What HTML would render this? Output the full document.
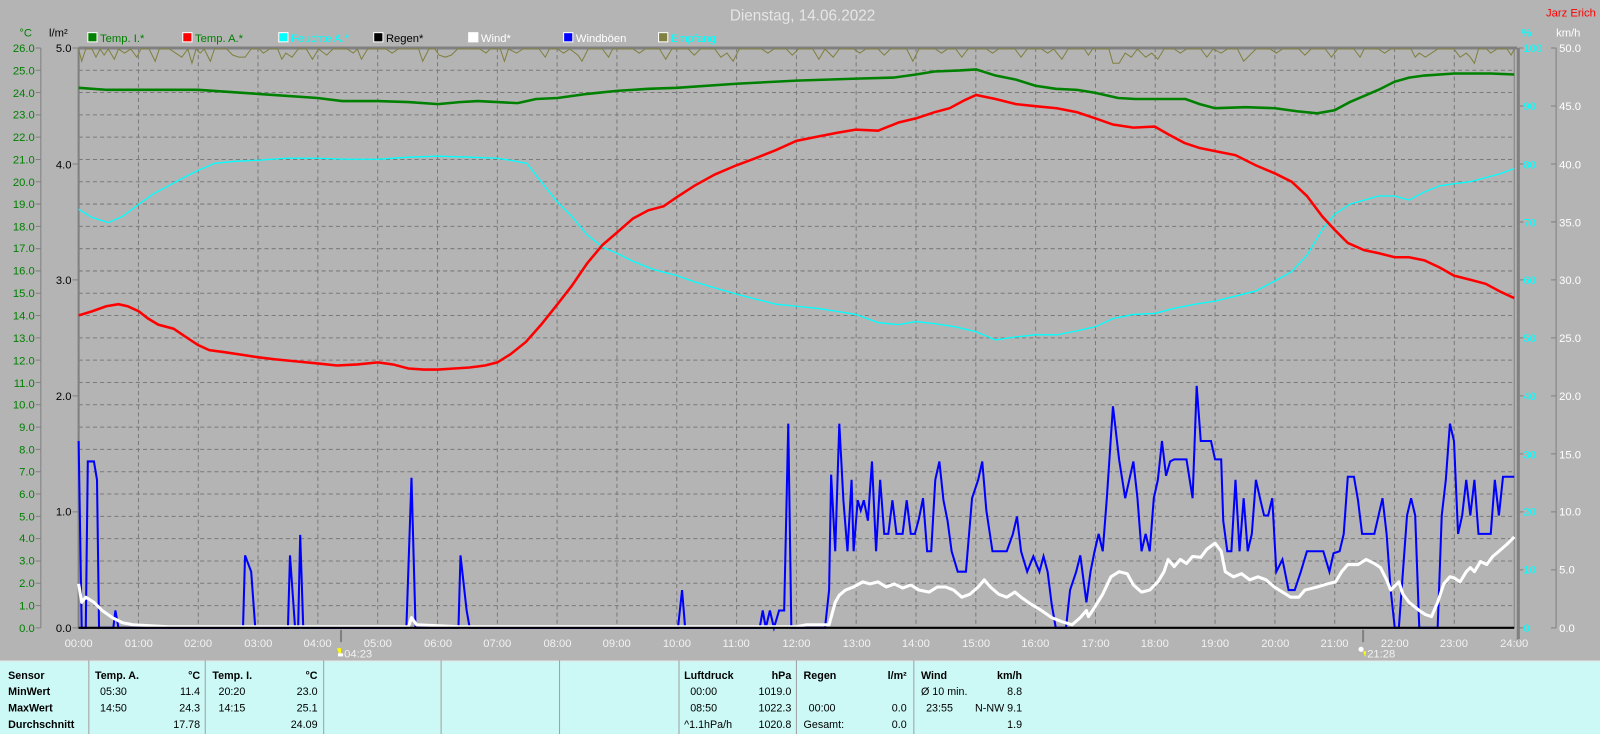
<!DOCTYPE html>
<html><head><meta charset="utf-8"><style>
html,body{margin:0;padding:0;background:#b4b4b4;width:1600px;height:734px;overflow:hidden}
svg{display:block}
text{font-family:"Liberation Sans",sans-serif}
</style></head><body>
<svg width="1600" height="734" viewBox="0 0 1567 719" preserveAspectRatio="none">
<rect x="0" y="0" width="1567" height="719" fill="#b4b4b4"/>
<text x="786" y="20" text-anchor="middle" font-size="15" fill="#e6e6e6">Dienstag, 14.06.2022</text>
<text x="1563" y="16" text-anchor="end" font-size="11" fill="#ff0000">Jarz Erich</text>
<!-- legend -->
<g font-size="11">
<rect x="86" y="32" width="9" height="9" fill="#008000" stroke="#fff"/><text x="98" y="41" fill="#008000">Temp. I.*</text>
<rect x="179" y="32" width="9" height="9" fill="#ff0000" stroke="#fff"/><text x="191" y="41" fill="#008000">Temp. A.*</text>
<rect x="273" y="32" width="9" height="9" fill="#00ffff" stroke="#fff"/><text x="285" y="41" fill="#00ffff">Feuchte A.*</text>
<rect x="366" y="32" width="9" height="9" fill="#000" stroke="#fff"/><text x="378" y="41" fill="#000">Regen*</text>
<rect x="459" y="32" width="9" height="9" fill="#fff" stroke="#fff"/><text x="471" y="41" fill="#fff">Wind*</text>
<rect x="552" y="32" width="9" height="9" fill="#0000ff" stroke="#fff"/><text x="564" y="41" fill="#fff">Windböen</text>
<rect x="645" y="32" width="9" height="9" fill="#808040" stroke="#fff"/><text x="657" y="41" fill="#00ffff">Empfang</text>
</g>
<text x="19" y="36" font-size="11" fill="#008000">°C</text>
<text x="48" y="36" font-size="11" fill="#000">l/m²</text>
<text x="1490" y="36" font-size="11" fill="#00ffff">%</text>
<text x="1524" y="36" font-size="11" fill="#fff">km/h</text>
<!-- grid -->
<g stroke="#7a7a7a" stroke-width="1" stroke-dasharray="4,3">
<path d="M77 593.2H1483M77 571.3H1483M77 549.5H1483M77 527.6H1483M77 505.8H1483M77 483.9H1483M77 462.1H1483M77 440.2H1483M77 418.4H1483M77 396.5H1483M77 374.7H1483M77 352.8H1483M77 331H1483M77 309.1H1483M77 287.3H1483M77 265.4H1483M77 243.6H1483M77 221.7H1483M77 199.9H1483M77 178H1483M77 156.2H1483M77 134.3H1483M77 112.5H1483M77 90.6H1483M77 68.8H1483"/>
<path d="M135.6 47V615M194.2 47V615M252.7 47V615M311.3 47V615M369.9 47V615M428.5 47V615M487.1 47V615M545.6 47V615M604.2 47V615M662.8 47V615M721.4 47V615M780 47V615M838.5 47V615M897.1 47V615M955.7 47V615M1014.3 47V615M1072.9 47V615M1131.4 47V615M1190 47V615M1248.6 47V615M1307.2 47V615M1365.8 47V615M1424.3 47V615"/>
</g>
<!-- frame -->
<path d="M77 47H1486" stroke="#808080" stroke-width="3"/>
<path d="M77 47V616" stroke="#808080" stroke-width="2"/>
<path d="M1483 47V615" stroke="#808080" stroke-width="1"/>
<path d="M1487 47V628" stroke="#808080" stroke-width="3"/>
<!-- left axis -->
<path d="M40 47V615" stroke="#808080"/>
<g stroke="#808080"><path d="M35 47H40M35 68.8H40M35 90.6H40M35 112.5H40M35 134.3H40M35 156.2H40M35 178H40M35 199.9H40M35 221.7H40M35 243.6H40M35 265.4H40M35 287.3H40M35 309.1H40M35 331H40M35 352.8H40M35 374.7H40M35 396.5H40M35 418.4H40M35 440.2H40M35 462.1H40M35 483.9H40M35 505.8H40M35 527.6H40M35 549.5H40M35 571.3H40M35 593.2H40M35 615H40"/>
<path d="M71 47H77M71 160.6H77M71 274.2H77M71 387.8H77M71 501.4H77M71 615H77"/></g>
<g font-size="11" fill="#008000" text-anchor="end">
<text x="34" y="51">26.0</text><text x="34" y="73">25.0</text><text x="34" y="95">24.0</text><text x="34" y="116">23.0</text><text x="34" y="138">22.0</text><text x="34" y="160">21.0</text><text x="34" y="182">20.0</text><text x="34" y="204">19.0</text><text x="34" y="226">18.0</text><text x="34" y="247">17.0</text><text x="34" y="269">16.0</text><text x="34" y="291">15.0</text><text x="34" y="313">14.0</text><text x="34" y="335">13.0</text><text x="34" y="357">12.0</text><text x="34" y="379">11.0</text><text x="34" y="400">10.0</text><text x="34" y="422">9.0</text><text x="34" y="444">8.0</text><text x="34" y="466">7.0</text><text x="34" y="488">6.0</text><text x="34" y="510">5.0</text><text x="34" y="531">4.0</text><text x="34" y="553">3.0</text><text x="34" y="575">2.0</text><text x="34" y="597">1.0</text><text x="34" y="619">0.0</text>
</g>
<g font-size="11" fill="#000" text-anchor="end">
<text x="70" y="51">5.0</text><text x="70" y="165">4.0</text><text x="70" y="278">3.0</text><text x="70" y="392">2.0</text><text x="70" y="505">1.0</text><text x="70" y="619">0.0</text>
</g>
<!-- right axes -->
<path d="M1524 47V615" stroke="#808080"/>
<g stroke="#808080"><path d="M1487 47H1492M1487 103.8H1492M1487 160.6H1492M1487 217.4H1492M1487 274.2H1492M1487 331H1492M1487 387.8H1492M1487 444.6H1492M1487 501.4H1492M1487 558.2H1492M1487 615H1492"/>
<path d="M1519 47H1524M1519 103.8H1524M1519 160.6H1524M1519 217.4H1524M1519 274.2H1524M1519 331H1524M1519 387.8H1524M1519 444.6H1524M1519 501.4H1524M1519 558.2H1524M1519 615H1524"/></g>
<g font-size="11" fill="#00ffff">
<text x="1492" y="51">100</text><text x="1492" y="108">90</text><text x="1492" y="165">80</text><text x="1492" y="222">70</text><text x="1492" y="278">60</text><text x="1492" y="335">50</text><text x="1492" y="392">40</text><text x="1492" y="449">30</text><text x="1492" y="505">20</text><text x="1492" y="562">10</text><text x="1492" y="619">0</text>
</g>
<g font-size="11" fill="#fff">
<text x="1527" y="51">50.0</text><text x="1527" y="108">45.0</text><text x="1527" y="165">40.0</text><text x="1527" y="222">35.0</text><text x="1527" y="278">30.0</text><text x="1527" y="335">25.0</text><text x="1527" y="392">20.0</text><text x="1527" y="449">15.0</text><text x="1527" y="505">10.0</text><text x="1527" y="562">5.0</text><text x="1527" y="619">0.0</text>
</g>
<!-- empfang -->
<polyline fill="none" stroke="#808040" stroke-width="1" points="77,48 80,60 84,48 90,48 94,56 98,48 102,54 106,48 112,58 116,48 122,52 128,48 134,56 138,48 146,48 152,60 156,48 166,48 172,52 178,56 184,48 188,62 192,48 196,52 200,48 206,60 210,48 222,48 228,54 234,56 240,56 246,48 254,48 258,52 264,48 272,48 276,58 280,52 286,56 292,48 300,48 306,58 312,48 320,54 326,48 340,48 346,52 350,48 354,58 360,48 378,48 384,52 390,48 404,48 410,48 414,60 420,48 426,48 430,54 436,56 442,54 448,48 470,48 476,52 480,48 490,48 494,60 498,48 506,52 512,48 528,48 534,56 538,48 546,48 552,52 558,48 566,54 570,60 576,48 590,48 596,56 600,48 620,48 626,52 632,48 646,48 652,58 658,48 674,48 680,54 686,48 700,48 706,56 712,52 718,60 724,48 740,48 746,48 752,52 758,48 770,48 776,54 782,48 796,48 802,58 808,48 816,56 822,48 836,48 842,52 848,48 860,48 866,54 872,48 888,48 894,60 900,48 916,48 922,52 928,48 936,48 942,56 948,48 966,48 972,52 978,48 994,48 1000,56 1006,48 1020,48 1026,52 1032,48 1040,58 1046,48 1062,48 1066,54 1070,48 1086,48 1090,62 1096,62 1102,52 1108,56 1114,48 1122,56 1128,52 1134,58 1140,48 1150,48 1156,52 1162,48 1176,48 1182,56 1188,48 1196,52 1202,48 1212,48 1218,60 1224,54 1230,48 1244,48 1250,52 1256,48 1272,48 1278,54 1284,48 1298,48 1304,56 1310,48 1326,48 1332,56 1336,48 1350,48 1356,52 1362,48 1382,48 1386,56 1390,52 1396,56 1402,52 1408,48 1424,48 1430,56 1436,52 1440,56 1444,62 1448,48 1456,48 1460,52 1466,48 1476,48 1480,54 1483,48"/>
<!-- humidity -->
<polyline fill="none" stroke="#00ffff" stroke-width="1.3" points="77,205 90,213 106,218 120,212 136,200 150,190 165,182 180,174 194,167 210,160 230,158 252,157 280,155 311,155 340,156 370,156 400,154 429,153 460,154 487,155 500,157 516,160 530,178 546,198 560,212 575,230 590,242 604,248 620,256 640,264 663,270 680,276 700,282 721,288 740,293 760,298 780,300 800,302 820,305 838,308 860,316 880,318 897,315 915,317 935,320 956,325 975,333 995,330 1014,328 1035,328 1055,324 1073,320 1090,312 1110,308 1131,307 1150,302 1170,298 1190,295 1210,290 1230,285 1249,275 1265,266 1280,250 1295,225 1307,210 1322,200 1336,196 1350,192 1366,192 1380,196 1395,188 1410,182 1424,180 1440,178 1455,174 1470,170 1483,165"/>
<!-- temp A -->
<polyline fill="none" stroke="#ff0000" stroke-width="2.5" points="77,309 90,305 104,300 116,298 125,300 136,305 145,312 155,318 170,322 182,330 194,338 205,343 220,345 240,348 253,350 270,352 290,354 311,356 330,358 350,357 370,355 385,357 400,361 415,362 429,362 445,361 460,360 475,358 487,355 500,347 515,335 530,318 546,298 560,280 575,258 590,240 604,228 620,214 635,206 650,202 663,193 680,182 700,171 721,162 740,155 760,147 780,138 800,134 820,130 838,127 860,128 880,120 897,116 915,110 930,106 945,98 956,93 975,97 995,102 1014,104 1035,106 1055,110 1073,116 1090,122 1110,125 1131,124 1145,132 1160,140 1175,145 1190,148 1210,152 1230,162 1249,170 1265,178 1280,192 1295,212 1307,225 1320,238 1336,245 1350,248 1366,252 1380,252 1395,255 1410,262 1424,270 1440,274 1455,278 1470,286 1483,292"/>
<!-- temp I -->
<polyline fill="none" stroke="#008000" stroke-width="2.5" points="77,86 105,88 136,88 194,88 253,92 311,96 335,99 370,99 400,100 429,102 450,100 468,99 487,100 507,101 525,97 546,96 575,92 604,89 635,87 663,86 721,82 780,79 839,77 875,76 897,73 915,70 940,69 956,68 975,74 995,78 1014,84 1034,87 1055,88 1073,91 1095,96 1112,97 1131,97 1161,97 1175,102 1190,106 1220,105 1249,106 1270,109 1290,111 1307,108 1322,100 1336,94 1350,88 1366,80 1380,76 1395,74 1424,72 1460,72 1483,73"/>
<!-- windboeen -->
<polyline fill="none" stroke="#0000ff" stroke-width="2" points="77,432 80,615 84,615 86,452 92,452 95,470 97,615 111,615 113,598 116,615 238,615 240,544 246,560 250,615 282,615 284,544 289,615 292,615 294,524 297,615 398,615 403,468 407,615 449,615 451,544 457,598 460,615 664,615 668,578 671,615 744,615 747,598 750,615 754,598 758,615 763,598 768,598 772,415 775,615 808,615 812,578 814,465 818,540 822,415 826,490 830,540 834,470 836,540 840,490 843,500 846,490 850,510 854,452 858,540 862,470 866,523 870,523 874,490 878,523 884,523 888,490 892,523 896,523 900,508 904,488 908,540 912,540 916,470 920,452 924,490 928,510 932,540 938,560 946,560 952,488 958,470 962,452 966,500 972,540 986,540 992,523 996,506 1000,540 1006,560 1012,545 1018,560 1022,545 1026,560 1030,592 1034,615 1044,615 1048,578 1054,560 1058,544 1064,590 1068,560 1072,540 1076,523 1080,540 1084,488 1090,398 1096,450 1102,488 1106,470 1110,452 1114,488 1118,540 1122,523 1126,540 1130,488 1134,470 1138,432 1142,466 1146,452 1150,450 1162,450 1168,488 1172,378 1176,432 1186,432 1190,450 1196,450 1198,510 1202,540 1206,540 1210,470 1214,540 1218,488 1222,540 1226,523 1230,470 1234,488 1238,505 1242,505 1246,488 1250,560 1256,548 1262,578 1268,578 1274,560 1280,540 1296,540 1302,560 1306,542 1312,540 1316,523 1320,467 1326,467 1330,490 1334,523 1346,523 1354,488 1358,523 1362,578 1366,615 1370,615 1374,560 1378,505 1382,488 1386,505 1390,615 1408,615 1412,505 1416,470 1420,415 1424,432 1428,523 1432,505 1436,470 1440,505 1444,470 1448,523 1460,523 1464,470 1468,505 1472,467 1483,467"/>
<!-- wind -->
<polyline fill="none" stroke="#ffffff" stroke-width="3" stroke-linejoin="round" points="77,572 80,590 84,585 92,590 100,598 110,605 120,610 130,612 165,614 395,614 400,614 403,605 408,612 450,614 780,614 790,612 812,612 818,590 822,583 828,578 836,575 845,570 852,572 860,570 868,575 876,572 884,576 892,573 900,578 910,580 918,575 926,575 934,578 942,585 950,582 958,575 964,568 970,575 978,582 986,585 994,580 1000,585 1010,592 1020,598 1030,605 1040,609 1050,612 1058,605 1064,598 1066,604 1072,595 1080,582 1088,565 1096,560 1104,562 1110,573 1118,580 1126,578 1134,570 1140,560 1144,548 1150,555 1156,548 1162,552 1168,545 1176,546 1182,538 1190,532 1196,540 1200,560 1208,565 1216,562 1224,568 1232,565 1240,568 1248,575 1256,580 1264,585 1272,585 1278,578 1290,575 1300,572 1308,570 1314,560 1320,553 1330,553 1338,548 1346,552 1352,556 1358,568 1362,578 1370,570 1374,582 1380,590 1390,598 1396,602 1402,604 1408,590 1414,572 1420,565 1424,566 1430,570 1436,560 1440,556 1444,560 1450,550 1456,553 1462,545 1468,540 1476,533 1483,526"/>
<!-- baseline -->
<path d="M77 615H1483" stroke="#000" stroke-width="2"/>
<!-- x labels -->
<g font-size="11" fill="#f2f2f2" text-anchor="middle">
<text x="77" y="634">00:00</text><text x="136" y="634">01:00</text><text x="194" y="634">02:00</text><text x="253" y="634">03:00</text><text x="311" y="634">04:00</text><text x="370" y="634">05:00</text><text x="429" y="634">06:00</text><text x="487" y="634">07:00</text><text x="546" y="634">08:00</text><text x="604" y="634">09:00</text><text x="663" y="634">10:00</text><text x="721" y="634">11:00</text><text x="780" y="634">12:00</text><text x="839" y="634">13:00</text><text x="897" y="634">14:00</text><text x="956" y="634">15:00</text><text x="1014" y="634">16:00</text><text x="1073" y="634">17:00</text><text x="1131" y="634">18:00</text><text x="1190" y="634">19:00</text><text x="1249" y="634">20:00</text><text x="1307" y="634">21:00</text><text x="1366" y="634">22:00</text><text x="1424" y="634">23:00</text><text x="1483" y="634">24:00</text>
</g>
<path d="M334 617V629M1335 617V629" stroke="#808080" stroke-width="2"/>
<path d="M330 635l4 0 0 5 -2 0z" fill="#ffff00"/><rect x="331" y="640" width="5" height="3" fill="#fff"/>
<path d="M1335 638l3 0 -1 6z" fill="#ffff00"/><circle cx="1333" cy="636" r="2.5" fill="#fff"/>
<g font-size="11" fill="#f2f2f2"><text x="337" y="644">04:23</text><text x="1339" y="644">21:28</text></g>
<!-- table -->
<rect x="0" y="647" width="1567" height="72" fill="#ccf8f6"/>
<path d="M0 647.5H1567" stroke="#e8e8e8"/>
<g stroke="#a0a0a0"><path d="M87 647V719M201 647V719M317 647V719M432 647V719M548 647V719M665 647V719M780 647V719M895 647V719"/></g>
<g font-size="10.5" fill="#000">
<g font-weight="bold"><text x="8" y="665">Sensor</text><text x="8" y="681">MinWert</text><text x="8" y="697">MaxWert</text><text x="8" y="713">Durchschnitt</text>
<text x="93" y="665">Temp. A.</text><text x="196" y="665" text-anchor="end">°C</text>
<text x="208" y="665">Temp. I.</text><text x="311" y="665" text-anchor="end">°C</text>
<text x="670" y="665">Luftdruck</text><text x="775" y="665" text-anchor="end">hPa</text>
<text x="787" y="665">Regen</text><text x="888" y="665" text-anchor="end">l/m²</text>
<text x="902" y="665">Wind</text><text x="1001" y="665" text-anchor="end">km/h</text></g>
<text x="98" y="681">05:30</text><text x="196" y="681" text-anchor="end">11.4</text>
<text x="98" y="697">14:50</text><text x="196" y="697" text-anchor="end">24.3</text>
<text x="196" y="713" text-anchor="end">17.78</text>
<text x="214" y="681">20:20</text><text x="311" y="681" text-anchor="end">23.0</text>
<text x="214" y="697">14:15</text><text x="311" y="697" text-anchor="end">25.1</text>
<text x="311" y="713" text-anchor="end">24.09</text>
<text x="676" y="681">00:00</text><text x="775" y="681" text-anchor="end">1019.0</text>
<text x="676" y="697">08:50</text><text x="775" y="697" text-anchor="end">1022.3</text>
<text x="670" y="713">^1.1hPa/h</text><text x="775" y="713" text-anchor="end">1020.8</text>
<text x="792" y="697">00:00</text><text x="888" y="697" text-anchor="end">0.0</text>
<text x="787" y="713">Gesamt:</text><text x="888" y="713" text-anchor="end">0.0</text>
<text x="902" y="681">Ø 10 min.</text><text x="1001" y="681" text-anchor="end">8.8</text>
<text x="907" y="697">23:55</text><text x="1001" y="697" text-anchor="end">N-NW 9.1</text>
<text x="1001" y="713" text-anchor="end">1.9</text>
</g>
</svg>
</body></html>
